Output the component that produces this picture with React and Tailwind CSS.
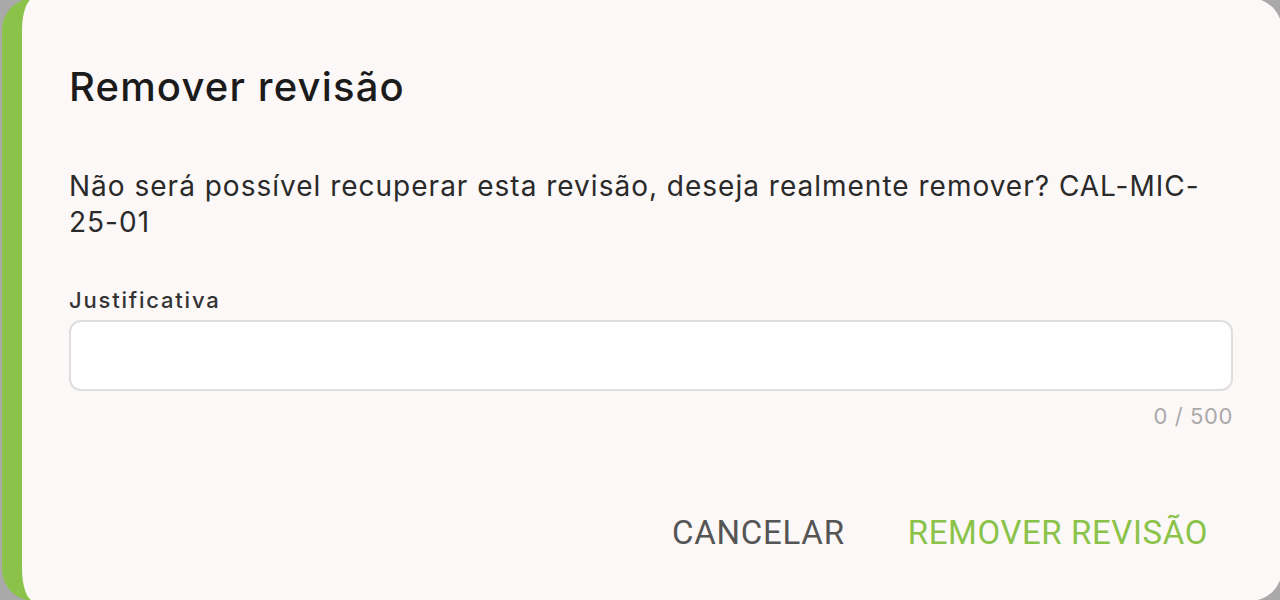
export default function App() {
  return (
    <div className="h-[600px] w-[1280px] overflow-hidden bg-[#a9a9a9]">
      <div
        className="ml-[2px] mt-[-2px] h-[603px] w-[1280px] rounded-[32px] border-l-[20px] border-[#8bc34a] bg-[#fcf8f7] pl-[47px] pr-[49px] pt-[65px]"
        style={{ fontFamily: "Inter, 'Noto Sans', sans-serif" }}
      >
        <h2 className="text-[40px] leading-[48px] font-medium tracking-[1.15px] text-[#1c1b1b]">Remover revisão</h2>
        <p className="mt-[57px] text-[28px] leading-[36px] tracking-[1px] text-[#2a2a2a]">
          Não será possível recuperar esta revisão, deseja realmente remover? CAL-MIC-25-01
        </p>
        <label className="mt-[46px] block text-[22px] leading-[28px] font-medium tracking-[1.8px] text-[#333]">Justificativa</label>
        <div className="mt-[6px] h-[71px] rounded-[12px] border-2 border-[#dedede] bg-white"></div>
        <div className="mt-[11px] text-right text-[22px] leading-[28px] tracking-[0.6px] text-[#aaa]">0 / 500</div>
        <div className="mt-[83px] flex justify-end gap-[63px] pr-[25px]" style={{ fontFamily: "Roboto, sans-serif" }}>
          <button className="text-[33px] leading-[40px] tracking-[0.75px] text-[#555]">CANCELAR</button>
          <button className="text-[33px] leading-[40px] tracking-[0.6px] text-[#8bc34a]">REMOVER REVISÃO</button>
        </div>
      </div>
    </div>
  );
}
